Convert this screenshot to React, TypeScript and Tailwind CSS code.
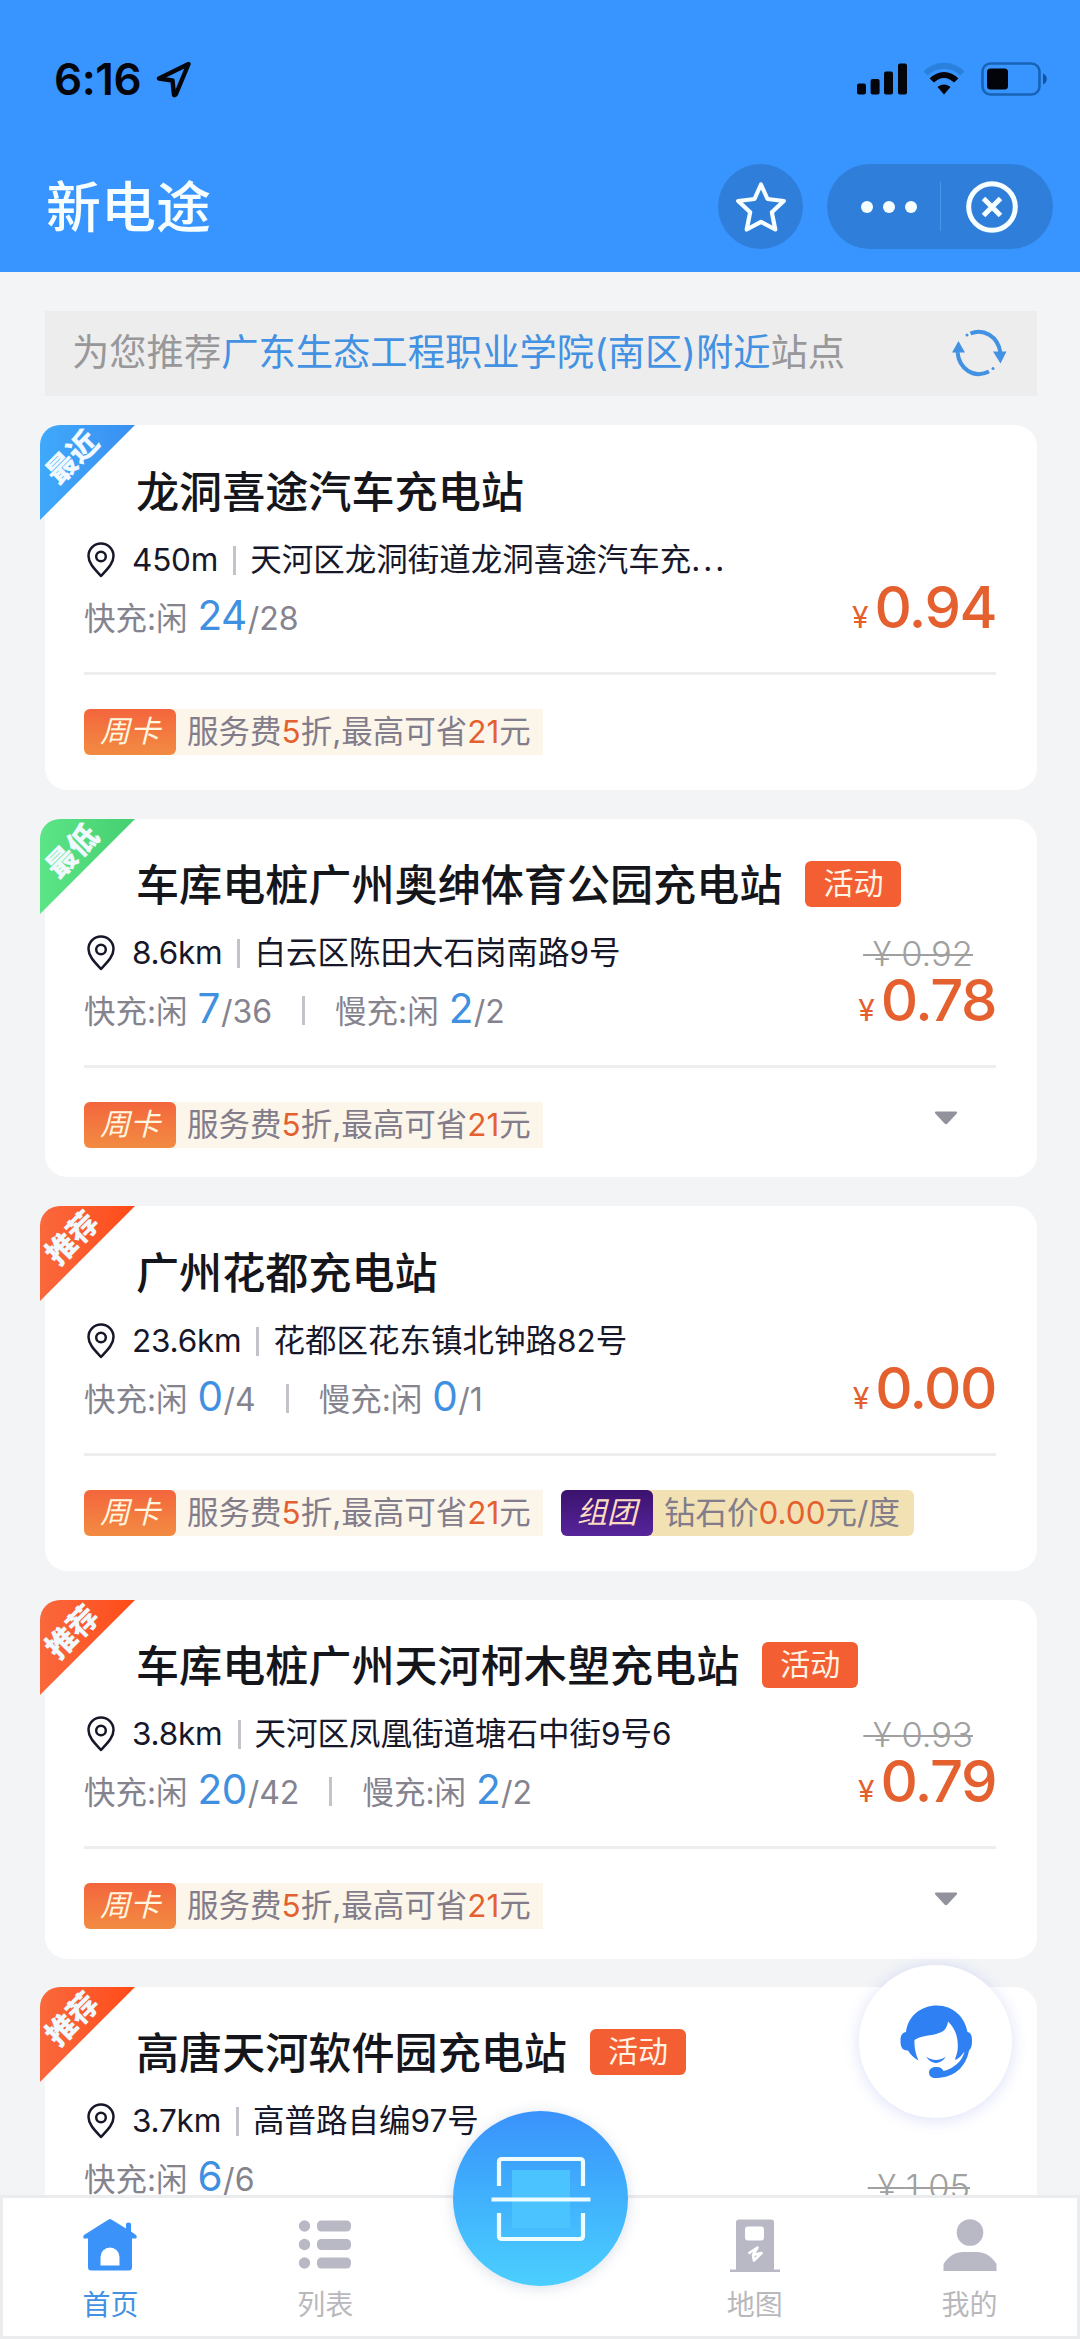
import React from "react";

type Slot = { label: string; free: string; total: string };

type Station = {
  ribbon: string;
  ribbonClass: string;
  name: string;
  promo?: boolean;
  distance: string;
  address: string;
  truncated?: boolean;
  slots: Slot[];
  oldPrice?: string;
  price?: string;
  group?: boolean;
  more?: boolean;
  boxClass: string;
};

const RECOMMENDED = "bg-linear-to-r from-[#f9683c] to-[#ff4a14]";

const stations: Station[] = [
  {
    ribbon: "最近",
    ribbonClass: "bg-linear-to-r from-[#3fa9fb] to-[#3a8ff0]",
    name: "龙洞喜途汽车充电站",
    distance: "450m",
    address: "天河区龙洞街道龙洞喜途汽车充",
    truncated: true,
    slots: [{ label: "快充", free: "24", total: "28" }],
    price: "0.94",
    boxClass: "h-[365px] pt-[44px] mb-[29px]",
  },
  {
    ribbon: "最低",
    ribbonClass: "bg-linear-to-r from-[#5be587] to-[#45cf70]",
    name: "车库电桩广州奥绅体育公园充电站",
    promo: true,
    distance: "8.6km",
    address: "白云区陈田大石岗南路9号",
    slots: [
      { label: "快充", free: "7", total: "36" },
      { label: "慢充", free: "2", total: "2" },
    ],
    oldPrice: "0.92",
    price: "0.78",
    more: true,
    boxClass: "h-[358px] pt-[43px] mb-[29px]",
  },
  {
    ribbon: "推荐",
    ribbonClass: RECOMMENDED,
    name: "广州花都充电站",
    distance: "23.6km",
    address: "花都区花东镇北钟路82号",
    slots: [
      { label: "快充", free: "0", total: "4" },
      { label: "慢充", free: "0", total: "1" },
    ],
    price: "0.00",
    group: true,
    boxClass: "h-[365px] pt-[44px] mb-[29px]",
  },
  {
    ribbon: "推荐",
    ribbonClass: RECOMMENDED,
    name: "车库电桩广州天河柯木塱充电站",
    promo: true,
    distance: "3.8km",
    address: "天河区凤凰街道塘石中街9号6",
    slots: [
      { label: "快充", free: "20", total: "42" },
      { label: "慢充", free: "2", total: "2" },
    ],
    oldPrice: "0.93",
    price: "0.79",
    more: true,
    boxClass: "h-[359px] pt-[43px] mb-[28px]",
  },
  {
    ribbon: "推荐",
    ribbonClass: RECOMMENDED,
    name: "高唐天河软件园充电站",
    promo: true,
    distance: "3.7km",
    address: "高普路自编97号",
    slots: [{ label: "快充", free: "6", total: "6" }],
    oldPrice: "1.05",
    boxClass: "h-[359px] pt-[43px]",
  },
];

function StatusBar() {
  return (
    <div className="flex h-[62px] items-center justify-between pl-[54px] pr-[32px] text-[#04060c]">
      <div className="flex items-center">
        <span className="w-[102px] text-[44px] leading-none font-semibold tracking-[-0.400px]">6:16</span>
        <svg width="36" height="38" viewBox="0 0 36 38" fill="none" stroke="currentColor" strokeWidth="4.400" strokeLinejoin="round">
          <path d="M32.500 4 L3 18.500 L16.500 20.500 L18 35 Q19 35.500 20 34 Z" />
        </svg>
      </div>
      <div className="flex items-center">
        <svg width="50" height="32" viewBox="0 0 50 32" fill="currentColor">
          <rect x="0" y="20.500" width="9" height="11" rx="2" />
          <rect x="13.600" y="16" width="9" height="15.500" rx="2" />
          <rect x="27" y="8.500" width="9" height="23" rx="2" />
          <rect x="41" y="0.500" width="9" height="31" rx="2" />
        </svg>
        <svg className="ml-[15px]" width="44" height="34" viewBox="0 0 44 34" fill="none">
          <path d="M3.500 11.500 C14 1 30 1 40.500 11.500" stroke="#2b80de" strokeWidth="6" />
          <path d="M9.800 18.500 C17 11 27 11 34.200 18.500" stroke="currentColor" strokeWidth="6" />
          <path d="M15.500 25 C19 21.500 25 21.500 28.500 25 L22 32.500 Z" fill="currentColor" />
        </svg>
        <svg className="ml-[15px]" width="67" height="34" viewBox="0 0 67 34" fill="none">
          <rect x="1.500" y="1.500" width="57" height="31" rx="8" stroke="#1763b5" strokeWidth="2.600" />
          <rect x="6" y="6.500" width="21" height="21" rx="3.500" fill="#02040a" />
          <path d="M62 11.500 C67 13.500 67 20.500 62 22.500 Z" fill="#1254a0" />
        </svg>
      </div>
    </div>
  );
}

function TitleBar() {
  return (
    <div className="flex items-center pl-[46px] pr-[27px]">
      <h1 className="flex-1 text-[55px] leading-[84px] font-medium text-[#f6feff]">新电途</h1>
      <div className="flex size-[85px] items-center justify-center rounded-full bg-[#2f7fda]">
        <svg width="54" height="54" viewBox="0 0 54 54" fill="none" stroke="#f6feff" strokeWidth="4.200" strokeLinejoin="round">
          <path d="M27 4.500 L33.500 19 L49.800 21 L37.800 32.200 L41.300 49.500 L27 41.800 L12.700 49.500 L16.200 32.200 L4.200 21 L20.500 19 Z" />
        </svg>
      </div>
      <div className="ml-[24px] flex h-[85px] w-[226px] items-center rounded-full bg-[#2f7fda]">
        <div className="flex h-[49px] w-[114px] items-center gap-[10px] border-r border-[#4a96ea] pl-[34px]">
          <span className="size-3 rounded-full bg-[#f6feff]" />
          <span className="size-3 rounded-full bg-[#f6feff]" />
          <span className="size-3 rounded-full bg-[#f6feff]" />
        </div>
        <svg className="ml-[25px]" width="52" height="52" viewBox="0 0 52 52" fill="none" stroke="#f6feff" strokeWidth="5">
          <circle cx="26" cy="26" r="23.300" />
          <path d="M17.500 17.500 L34.500 34.500 M34.500 17.500 L17.500 34.500" />
        </svg>
      </div>
    </div>
  );
}

function RefreshIcon() {
  return (
    <svg className="mb-[2px]" width="56" height="48" viewBox="0 0 56 48" fill="none" stroke="#4291e2" strokeWidth="4">
      <path d="M19.500 4.500 C32 -1 47 7 49.500 24" />
      <path d="M42 22.500 L55.500 22.500 L49.500 34.500 Z" fill="#4291e2" stroke="none" />
      <path d="M6.500 23 C8 40 23 50 38 42.500" />
      <path d="M1 23.500 L7.500 12 L14 23.500 Z" fill="#4291e2" stroke="none" />
      <circle cx="16" cy="6" r="1.500" fill="#4291e2" stroke="none" />
      <circle cx="42" cy="39.500" r="1.500" fill="#4291e2" stroke="none" />
    </svg>
  );
}

function SlotInfo({ slot }: { slot: Slot }) {
  return (
    <span className="flex items-baseline text-[31.500px] text-[#84838e]">
      <span>{slot.label}:闲</span>
      <span className="ml-[10px] text-[40.500px] leading-none tracking-[-0.600px] text-[#3f90e0]">{slot.free}</span>
      <span className="ml-[1px] text-[32px]">/{slot.total}</span>
    </span>
  );
}

function StationCard({ s }: { s: Station }) {
  return (
    <article className={`relative shrink-0 rounded-[22px] bg-white pl-[39px] pr-[41px] ${s.boxClass}`}>
      <div
        className={`absolute top-0 -left-[5px] h-[95px] w-[95px] rounded-tl-[20px] [clip-path:polygon(0_0,100%_0,0_100%)] ${s.ribbonClass}`}
      >
        <span className="absolute top-[17px] left-[1px] w-[62px] -rotate-45 text-center text-[30px] leading-[30px] font-black text-[#f0f9ff]">
          {s.ribbon}
        </span>
      </div>

      <div className="flex h-[46px] items-center pl-[52px]">
        <h2 className="text-[43.100px] leading-[46px] font-medium text-[#15161b]">{s.name}</h2>
        {s.promo && (
          <span className="mb-[2px] ml-[23px] h-[46px] w-[96px] rounded-[6px] bg-[#f35f33] text-center text-[30px] leading-[45px] text-[#fff3e6]">
            活动
          </span>
        )}
      </div>

      <div className="mt-[25px] flex h-[99px] justify-between">
        <div className="flex flex-col justify-between">
          <div className="flex h-[40px] items-center text-[31.500px] text-[#17172a]">
            <svg width="34" height="38" viewBox="0 0 34 38" fill="none" stroke="currentColor" strokeWidth="2.500">
              <path d="M17 35 C11 28.500 4.500 22.500 4.500 15 A12.500 12.500 0 0 1 29.500 15 C29.500 22.500 23 28.500 17 35 Z" strokeLinejoin="round" />
              <circle cx="17" cy="15.500" r="4.800" />
            </svg>
            <span className="ml-[14px] tracking-[-0.200px]">{s.distance}</span>
            <span className="mr-[14px] ml-[15px] h-[29px] w-[3px] bg-[#c3c3cb]" />
            <span>
              {s.address}
              {s.truncated && <span className="tracking-[3px]">...</span>}
            </span>
          </div>
          <div className="flex h-[40px] items-center">
            {s.slots.map((slot, i) => (
              <React.Fragment key={slot.label}>
                {i > 0 && <span className="mx-[30px] mb-1 h-[29px] w-[3px] bg-[#c3c3cb]" />}
                <SlotInfo slot={slot} />
              </React.Fragment>
            ))}
          </div>
        </div>
        <div className="flex flex-col items-end justify-end">
          {s.oldPrice && (
            <span
              className={`text-[34.500px] leading-[36px] font-light text-[#a0a0a0] line-through decoration-2 ${
                s.price ? "mr-[18px] -mb-px px-[5px]" : "mr-[22px] -mb-[5px] px-[4px]"
              }`}
            >
              {"\u00a0¥ "}
              {s.oldPrice}
            </span>
          )}
          {s.price && (
            <span className="mb-[3px] flex items-baseline text-[#e4602f]">
              <span className="mr-[6px] text-[30px] leading-none">¥</span>
              <span className="text-[58px] leading-[58px] font-medium tracking-[-1.500px]">{s.price}</span>
            </span>
          )}
        </div>
      </div>

      <div className="mt-[33px] h-[3px] bg-[#eeeeef]" />

      {s.price && (
        <div className="mt-[34px] flex h-[46px] items-center text-[31.500px] leading-[45px] text-[#837c8a]">
          <div className="flex h-[46px] w-[459px] bg-[#fcf6ea]">
            <span className="w-[92px] rounded-[6px] bg-linear-to-b from-[#f3653d] to-[#f28b42] text-center text-[30px] leading-[45px] text-[#fff6df] italic">
              周卡
            </span>
            <span className="ml-[11px] whitespace-nowrap">
              服务费<span className="text-[#e4602f]">5</span>折,最高可省<span className="text-[#e4602f]">21</span>元
            </span>
          </div>
          {s.group && (
            <div className="ml-[18px] flex h-[46px] w-[353px] rounded-[6px] bg-[#f2e2b3]">
              <span className="w-[92px] rounded-[6px] bg-linear-to-b from-[#3b126e] to-[#57259c] text-center text-[30px] leading-[45px] text-[#fbdcc0] italic">
                组团
              </span>
              <span className="ml-[11px] whitespace-nowrap">
                钻石价<span className="text-[#e4602f]">0.00</span>元/度
              </span>
            </div>
          )}
          {s.more && (
            <svg className="mr-[38px] mb-[14px] ml-auto" width="24" height="14" viewBox="0 0 24 14" fill="#92929c">
              <path d="M2 0.500 H22 Q24 1 22.500 2.800 L13.500 12.500 Q12 14 10.500 12.500 L1.500 2.800 Q0 1 2 0.500 Z" />
            </svg>
          )}
        </div>
      )}
    </article>
  );
}

function ServiceButton() {
  return (
    <div className="absolute top-[1965px] left-[859px] flex size-[153px] items-center justify-center rounded-full bg-white shadow-[0_2px_16px_rgba(80,100,220,0.2)]">
      <svg width="74" height="74" viewBox="0 0 74 74" fill="#2f80f2">
        <path d="M19.500 55.500 C15 53 11 49 9 45.500 C3.500 46 1.500 42 1.500 36 C1.500 30 3 28 7 27 C9 11 22 0.500 38 0.500 C54 0.500 66 12 68.500 27 C72 28 73 30 73 36 C73 41 72 44 70 45.500 C67 62 55 72.500 38 73 C33 73.500 30 71 30 67.500 C30 63.500 34 61.500 39 62 C42 62.500 43.500 64 44.500 66 C54 63.500 63 57 65.500 46.500 C63 50 60 53.500 56.500 55 C55.500 53 58 51 58.700 44 C59.500 32 56 23 49 16.500 C48 24 44 27 40 28 C33 31 22 30 15.500 35 C15 43 17 50 19.500 55.500 Z" />
        <path d="M27 51.500 C33 56 41 56 47 51.500 C42 60 32 60 27 51.500 Z" />
      </svg>
    </div>
  );
}

function ScanButton() {
  return (
    <div className="absolute -top-[87px] left-[450px] flex size-[175px] items-center justify-center rounded-full bg-linear-to-b from-[#3a92fb] to-[#4bcffe] shadow-[0_2px_14px_rgba(90,110,150,0.22)]">
      <svg width="100" height="86" viewBox="0 0 100 86" fill="none" stroke="#effcff" strokeWidth="4.200">
        <rect x="21" y="14" width="58" height="58" fill="#4bc3ff" stroke="none" />
        <path d="M8 30 V6 Q8 3 11 3 H89 Q92 3 92 6 V30" />
        <path d="M8 57 V80 Q8 83 11 83 H89 Q92 83 92 80 V57" />
        <path d="M0.500 43.500 H99.500" />
      </svg>
    </div>
  );
}

function HomeIcon() {
  return (
    <svg width="54" height="52" viewBox="0 0 54 52" fill="#3b92f8">
      <path d="M27 0 Q28 0 30 1.500 L43 9.500 V5 Q43 3.500 45.500 3.500 Q48 3.500 48 5 V12.500 L53 16 Q54.500 18 53 19.500 H49 V48 Q49 51.500 46 51.500 H8 Q5 51.500 5 48 V19.500 H1 Q-0.500 18 1 16 L24 1.500 Q26 0 27 0 Z M17.500 46.500 H36.500 V38 A9.500 9.500 0 0 0 17.500 38 Z" fillRule="evenodd" />
    </svg>
  );
}

function ListIcon() {
  return (
    <svg width="54" height="52" viewBox="0 0 54 52" fill="#b9b9c6">
      <circle cx="6.500" cy="7" r="5.700" />
      <circle cx="6.500" cy="25.500" r="5.700" />
      <circle cx="6.500" cy="44" r="5.700" />
      <rect x="19" y="1.500" width="34" height="11" rx="4.500" />
      <rect x="19" y="20" width="34" height="11" rx="4.500" />
      <rect x="19" y="38.500" width="34" height="11" rx="4.500" />
    </svg>
  );
}

function PumpIcon() {
  return (
    <svg width="52" height="54" viewBox="0 0 52 54" fill="#b9b9c6">
      <path d="M10 0.500 H42 Q45 0.500 45 3.500 V50.500 H51 V53 H1 V50.500 H7 V3.500 Q7 0.500 10 0.500 Z" />
      <rect x="16" y="7.500" width="19" height="14" rx="3" fill="#fff" />
      <path d="M19.500 34.500 L28.500 28.500 L24 36 L32.500 34 L25 41.500 L24 36.500" fill="none" stroke="#fff" strokeWidth="2.600" strokeLinejoin="round" />
    </svg>
  );
}

function PersonIcon() {
  return (
    <svg width="54" height="52" viewBox="0 0 54 52" fill="#b9b9c6">
      <circle cx="27" cy="13.500" r="13.300" />
      <path d="M0.500 52 V45 C6 36.500 13 33 20 33 H34 C41 33 48 36.500 53.500 45 V52 Z" />
    </svg>
  );
}

function NavItem({ icon, label, className }: { icon: React.ReactNode; label: string; className: string }) {
  return (
    <div className={`flex flex-col items-center ${className}`}>
      <div className="flex h-[54px] items-start">{icon}</div>
      <span className="mt-[14px] text-[28px] leading-[36px]">{label}</span>
    </div>
  );
}

function BottomNav() {
  return (
    <nav className="absolute inset-x-0 bottom-0 h-[144px] border-[3px] border-[#ebecee] bg-white">
      <div className="grid h-full grid-cols-5 pt-[21px]">
        <NavItem icon={<HomeIcon />} label="首页" className="text-[#4291e2]" />
        <NavItem icon={<ListIcon />} label="列表" className="text-[#b8b8bd]" />
        <div />
        <NavItem icon={<PumpIcon />} label="地图" className="text-[#b8b8bd]" />
        <NavItem icon={<PersonIcon />} label="我的" className="text-[#b8b8bd]" />
      </div>
      <ScanButton />
    </nav>
  );
}

export default function App() {
  return (
    <div className="relative flex h-[2339px] w-[1080px] flex-col overflow-hidden bg-[#f2f4f6] font-['Inter','Noto_Sans_CJK_SC',sans-serif]">
      <header className="h-[272px] shrink-0 bg-[#3895ff] pt-[48px]">
        <StatusBar />
        <div className="mt-[54px]">
          <TitleBar />
        </div>
      </header>
      <main className="flex flex-col pt-[39px] pr-[43px] pl-[45px]">
        <div className="mb-[29px] flex h-[85px] items-center justify-between bg-[#ededed] pr-[30px] pl-[27px]">
          <p className="mb-[2px] text-[37.300px] text-[#98989b]">
            为您推荐<span className="text-[#4291e2]">广东生态工程职业学院(南区)附近</span>站点
          </p>
          <RefreshIcon />
        </div>
        {stations.map((s) => (
          <StationCard key={s.name} s={s} />
        ))}
      </main>
      <ServiceButton />
      <BottomNav />
    </div>
  );
}
